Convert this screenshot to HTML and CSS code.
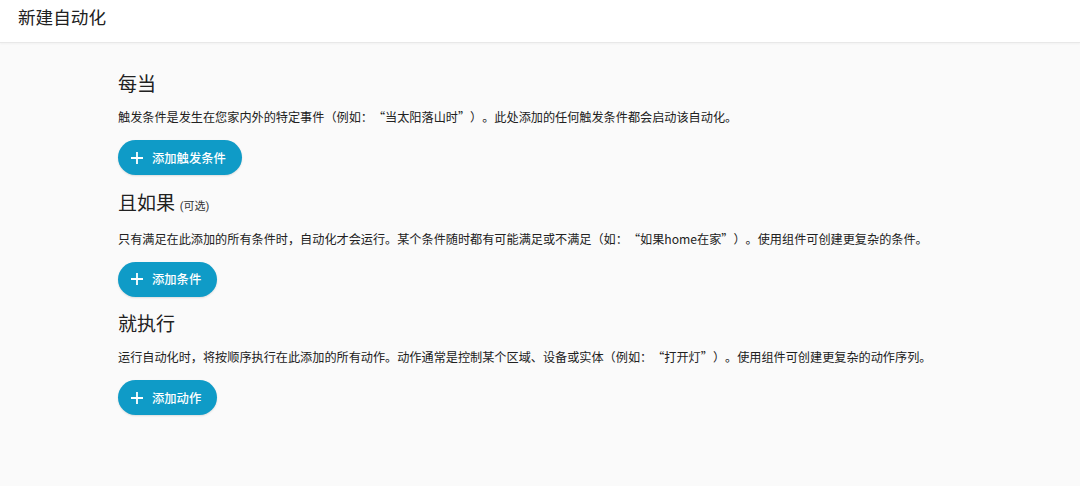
FILE: index.html
```html
<!DOCTYPE html>
<html lang="zh">
<head>
<meta charset="utf-8">
<title>新建自动化</title>
<link rel="stylesheet" href="styles.css">
</head>
<body>
<header class="topbar">
  <h1 class="title">新建自动化</h1>
</header>
<main class="content">
  <section class="section">
    <h2 class="heading">每当</h2>
    <p class="desc">触发条件是发生在您家内外的特定事件（例如：“当太阳落山时”）。此处添加的任何触发条件都会启动该自动化。</p>
    <button class="add-btn" type="button">
      <svg class="plus" viewBox="0 0 14 14" width="14" height="14"><path d="M7 1v12M1 7h12" stroke="currentColor" stroke-width="1.8" fill="none"/></svg>
      <span>添加触发条件</span>
    </button>
  </section>
  <section class="section">
    <h2 class="heading">且如果 <span class="optional">(可选)</span></h2>
    <p class="desc">只有满足在此添加的所有条件时，自动化才会运行。某个条件随时都有可能满足或不满足（如：“如果home在家”）。使用组件可创建更复杂的条件。</p>
    <button class="add-btn" type="button">
      <svg class="plus" viewBox="0 0 14 14" width="14" height="14"><path d="M7 1v12M1 7h12" stroke="currentColor" stroke-width="1.8" fill="none"/></svg>
      <span>添加条件</span>
    </button>
  </section>
  <section class="section">
    <h2 class="heading">就执行</h2>
    <p class="desc">运行自动化时，将按顺序执行在此添加的所有动作。动作通常是控制某个区域、设备或实体（例如：“打开灯”）。使用组件可创建更复杂的动作序列。</p>
    <button class="add-btn" type="button">
      <svg class="plus" viewBox="0 0 14 14" width="14" height="14"><path d="M7 1v12M1 7h12" stroke="currentColor" stroke-width="1.8" fill="none"/></svg>
      <span>添加动作</span>
    </button>
  </section>
</main>
</body>
</html>
```
FILE: styles.css
```css
* { box-sizing: border-box; }
html, body { height: 100%; }
body {
  margin: 0;
  background: #fafafa;
  font-family: Roboto, "Noto Sans CJK SC", "Noto Sans", sans-serif;
  color: #212121;
}
.topbar {
  height: 43px;
  background: #ffffff;
  border-bottom: 1px solid #e8e8e8;
  box-shadow: 0 1px 2px rgba(0,0,0,0.04);
  display: flex;
  align-items: center;
  padding: 0 18px;
}
.title {
  margin: 0;
  font-size: 17.6px;
  font-weight: 400;
  line-height: 24px;
  color: #212121;
  position: relative;
  top: -3px;
}
.content {
  padding: 30px 118px;
  display: flex;
  flex-direction: column;
  gap: 16.5px;
}
.section {
  display: flex;
  flex-direction: column;
  align-items: flex-start;
}
.heading {
  margin: 0;
  font-size: 19px;
  font-weight: 400;
  line-height: 24px;
  color: #212121;
}
.optional {
  font-size: 11px;
  color: #333;
}
.desc {
  margin: 11px 0 14px;
  font-family: "Noto Sans CJK SC", Roboto, sans-serif;
  text-spacing-trim: space-all;
  font-size: 12.15px;
  line-height: 18px;
  color: #212121;
}
.add-btn {
  height: 35px;
  border: none;
  border-radius: 18px;
  background: #0f9bc7;
  color: #ffffff;
  display: inline-flex;
  align-items: center;
  gap: 8px;
  padding: 0 16px 0 12px;
  font-family: Roboto, "Noto Sans CJK SC", "Noto Sans", sans-serif;
  font-size: 12.3px;
  font-weight: 500;
  box-shadow: 0 1px 2px rgba(0,0,0,0.12);
  cursor: pointer;
}
.plus { display: block; }
```
